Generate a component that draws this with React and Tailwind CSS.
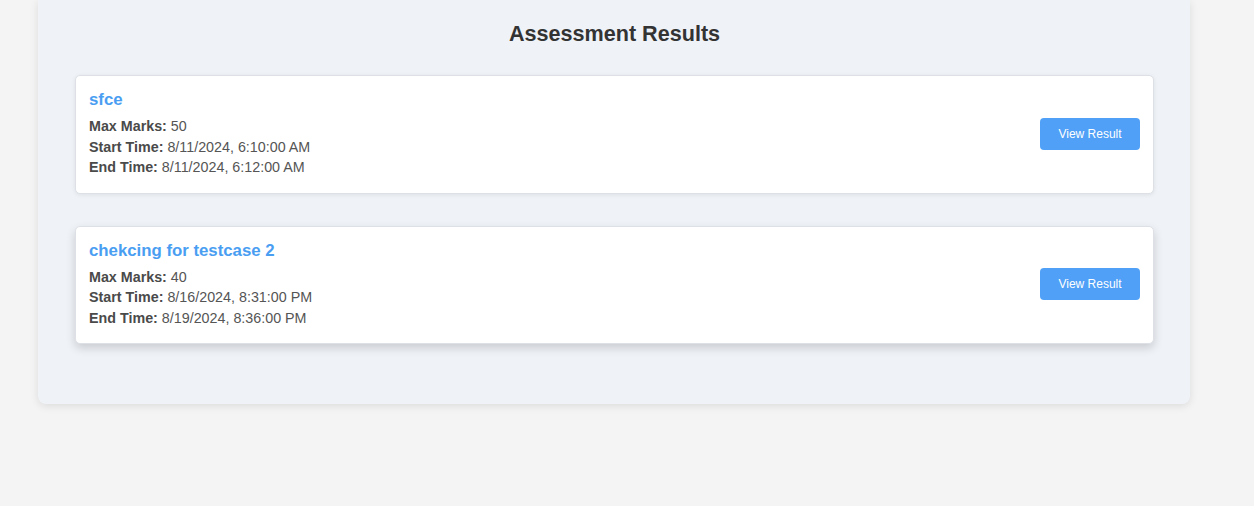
import React from 'react';

const RESULTS = [
  { title: 'sfce', maxMarks: 50, start: '8/11/2024, 6:10:00 AM', end: '8/11/2024, 6:12:00 AM', raised: false },
  { title: 'chekcing for testcase 2', maxMarks: 40, start: '8/16/2024, 8:31:00 PM', end: '8/19/2024, 8:36:00 PM', raised: true },
];

export default function App() {
  return (
    <div className="min-h-screen bg-[#f4f4f4] font-['Liberation_Sans',Arial,sans-serif]">
      <div className="ml-[38px] w-[1152px] bg-[#eff2f7] rounded-b-lg shadow-[0_2px_8px_rgba(0,0,0,0.1)] pl-[37px] pr-[36px] pt-[21px] pb-[60px]">
        {/* Heading */}
        <h2 className="text-center text-[21.6px] leading-[26px] font-bold text-[#333]">
          Assessment Results
        </h2>

        {/* Cards */}
        <div className="mt-[28px] flex flex-col gap-[32px]">
          {RESULTS.map((r) => (
            <div
              key={r.title}
              className={`flex items-center justify-between bg-white rounded-[5px] border border-[#dde1e6] px-[13px] pt-[14px] pb-[15px] ${
                r.raised
                  ? 'shadow-[0_4px_10px_rgba(0,0,0,0.16)]'
                  : 'shadow-[0_1px_4px_rgba(0,0,0,0.08)]'
              }`}
            >
              <div>
                <h3 className="text-[16.8px] leading-[19px] font-bold text-[#4a9ef2]">{r.title}</h3>
                <div className="mt-[7px] text-[14.3px] leading-[20.5px] text-[#555]">
                  <p><span className="font-bold text-[#4a4a4a]">Max Marks:</span> {r.maxMarks}</p>
                  <p><span className="font-bold text-[#4a4a4a]">Start Time:</span> {r.start}</p>
                  <p><span className="font-bold text-[#4a4a4a]">End Time:</span> {r.end}</p>
                </div>
              </div>
              <button className="w-[100px] h-[32px] rounded-[4px] bg-[#4fa0f6] text-white text-[12px]">
                View Result
              </button>
            </div>
          ))}
        </div>
      </div>
    </div>
  );
}
